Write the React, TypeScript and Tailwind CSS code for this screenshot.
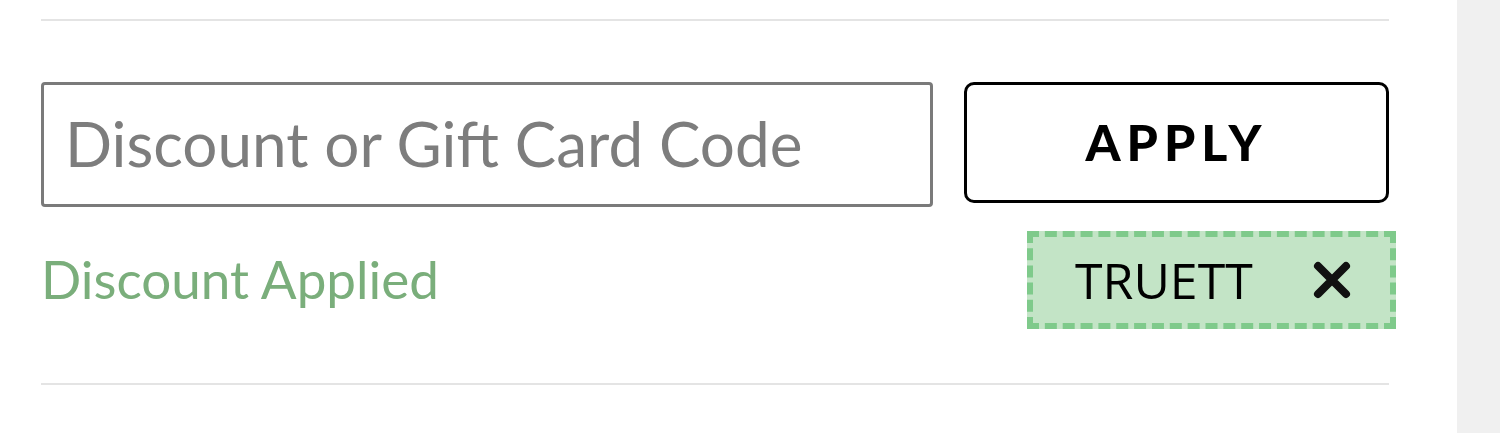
import React from "react";

function CloseIcon() {
  return (
    <svg width="40" height="38" viewBox="0 0 40 38" aria-hidden="true">
      <path d="M6 5 L34 33 M34 5 L6 33" stroke="#111" strokeWidth="8" strokeLinecap="round" />
    </svg>
  );
}

export default function App() {
  return (
    <div className="flex w-[1500px] h-[433px] bg-white overflow-hidden">
      <div className="flex-1 pl-[41px] pr-[68px] pt-[19px]">
        <div className="h-[2px] bg-[#e4e4e4]" />

        <div className="mt-[61px] flex items-start gap-[31px]">
          <input
            type="text"
            placeholder="Discount or Gift Card Code"
            className="w-[892px] h-[125px] border-[3px] border-[#7a7a7a] rounded-[4px] pl-[21px] pr-[21px] pb-[4px] text-[62px] text-[#555] placeholder:text-[#7d7d7d] outline-none"
            style={{ fontFamily: "Lato, 'Open Sans', sans-serif" }}
          />
          <button
            type="button"
            className="flex-1 h-[121px] border-[3px] border-black rounded-[10px] bg-white text-[50px] font-black tracking-[0.12em] text-black flex items-center justify-center"
            style={{ fontFamily: "Lato, 'Open Sans', sans-serif" }}
          >
            APPLY
          </button>
        </div>

        <div className="mt-[24px] flex items-center justify-between mr-[-7px]">
          <span
            className="text-[53px] text-[#7aae7b] pb-[2px]"
            style={{ fontFamily: "Lato, 'Open Sans', sans-serif" }}
          >
            Discount Applied
          </span>
          <div className="w-[369px] h-[98px] border-[6px] border-dashed border-[#7fca8b] bg-[#c3e4c6] flex items-center justify-between pl-[42px] pr-[38px]">
            <span
              className="text-[50px] text-black leading-none"
              style={{ fontFamily: "'Open Sans', 'DejaVu Sans', sans-serif" }}
            >
              TRUETT
            </span>
            <CloseIcon />
          </div>
        </div>

        <div className="mt-[54px] h-[2px] bg-[#e4e4e4]" />
      </div>
      <div className="w-[43px] h-full bg-[#f0f0f0]" />
    </div>
  );
}
